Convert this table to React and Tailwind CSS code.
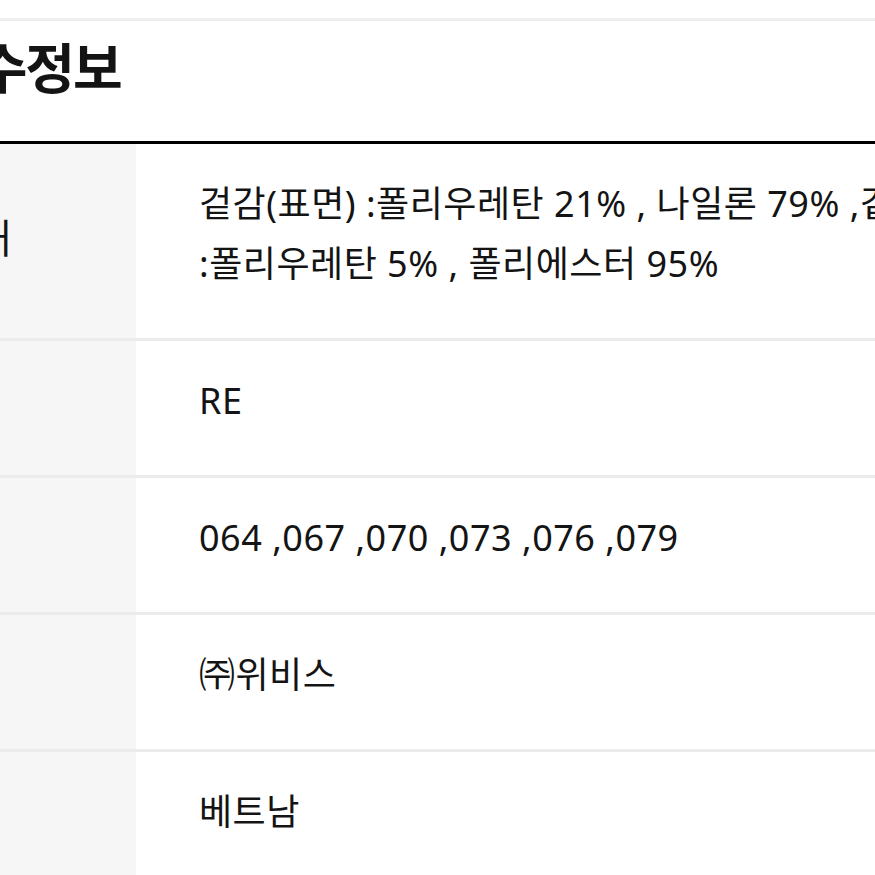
const rows = [
  {
    label: '제품소재',
    lines: ['겉감(표면) :폴리우레탄 21% , 나일론 79% ,겉감(이면)', ':폴리우레탄 5% , 폴리에스터 95%'],
  },
  { label: '색상', lines: ['RE'] },
  { label: '치수', lines: ['064 ,067 ,070 ,073 ,076 ,079'] },
  { label: '제조사', lines: ['㈜위비스'] },
  { label: '제조국', lines: ['베트남'] },
];

export default function App() {
  return (
    <div
      className="h-[875px] w-[875px] overflow-hidden bg-white text-[#141414]"
      style={{ fontFamily: '"Noto Sans", "Noto Sans CJK KR", sans-serif' }}
    >
      <div className="-ml-[200px] w-[1075px]">
        {/* previous section edge */}
        <div className="h-[18px]" />
        <div className="h-[3px] bg-[#eeeeee]" />

        {/* Title */}
        <div className="h-[120px] pl-[130px] pt-[18px]">
          <h2
            className="whitespace-nowrap text-[54px] font-bold leading-none tracking-[-2px]"
            style={{ fontFamily: '"Noto Sans CJK KR", sans-serif' }}
          >
            필수정보
          </h2>
        </div>
        <div className="h-[3px] bg-black" />

        {/* Info table */}
        <div>
          {rows.map((row, i) => (
            <div key={i} className="grid grid-cols-[336px_1fr] border-b-[3px] border-[#ebebeb]">
              <div className="flex items-center bg-[#f6f6f6] pb-[10px] pl-[64px]">
                <span
                  className="whitespace-nowrap text-[40px] leading-[60px]"
                  style={{ fontFamily: '"Noto Sans CJK KR", sans-serif' }}
                >
                  {row.label}
                </span>
              </div>
              <div className="pb-[44px] pl-[63px] pt-[30px]">
                {row.lines.map((line, j) => (
                  <p key={j} className="whitespace-nowrap text-[36px] leading-[60px] tracking-[0.5px]">
                    {line}
                  </p>
                ))}
              </div>
            </div>
          ))}
        </div>
      </div>
    </div>
  );
}
